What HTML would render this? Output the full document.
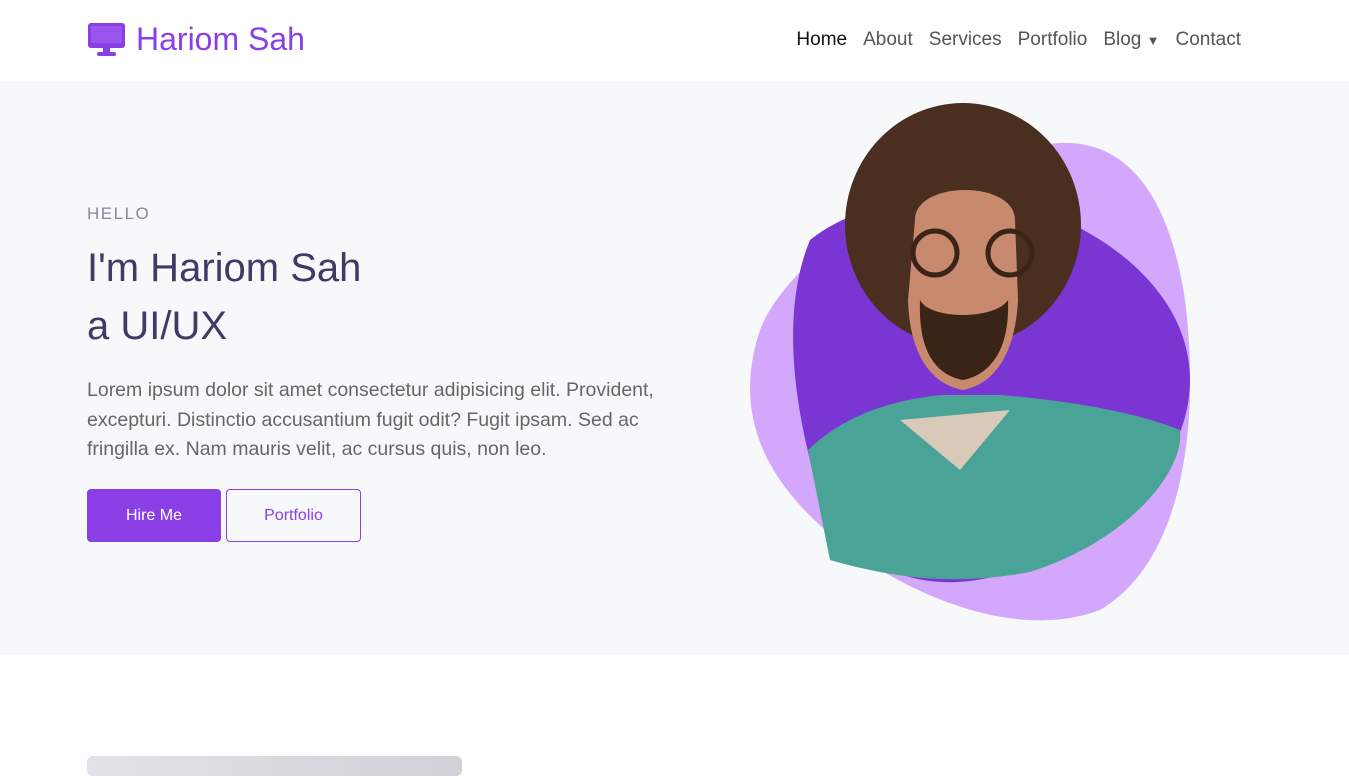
<!DOCTYPE html>
<html><head><meta charset="utf-8"><style>
*{margin:0;padding:0;box-sizing:border-box}
body{width:1349px;height:768px;overflow:hidden;font-family:"Liberation Sans",sans-serif;background:#fff;position:relative}
.nav{height:81px;background:#fff;position:relative}
.logo{position:absolute;left:87px;top:21px;display:flex;align-items:center;color:#8a3ee6;font-size:32px}
.logo svg{margin-right:10px}
.menu{position:absolute;right:108px;top:29px;display:flex;gap:16px;font-size:19px;color:#555}
.menu .a{color:#111}
.hero{position:absolute;top:81px;left:0;width:1349px;height:574px;background:#f7f8fa}
.hello{position:absolute;left:87px;top:204px;font-size:17px;letter-spacing:1.5px;color:#858a9b}
.h1{position:absolute;left:87px;top:239px;font-size:40px;color:#3e3c66;line-height:58px}
.p{position:absolute;left:87px;top:376px;width:580px;font-size:19.5px;line-height:29.5px;color:#666}
.btn{position:absolute;top:489px;height:53px;border-radius:4px;font-size:16px;display:flex;align-items:center;justify-content:center}
.b1{left:87px;width:134px;background:#8a3ee6;color:#fff}
.b2{left:226px;width:135px;border:1px solid #8a3ee6;color:#8a3ee6}
.card{position:absolute;left:87px;top:756px;width:375px;height:20px;background:linear-gradient(90deg,#e2e3e6,#d0d2d8);border-radius:6px}
</style></head><body>
<div class="nav">
<div class="logo"><svg width="39" height="35" viewBox="0 0 39 35"><rect x="1" y="1" width="37" height="25" rx="3" fill="#8a3ee6"/><rect x="4" y="4" width="31" height="17" fill="#9a55ee"/><rect x="16" y="25" width="7" height="6" fill="#8a3ee6"/><rect x="10" y="30" width="19" height="4" rx="2" fill="#8a3ee6"/></svg>Hariom Sah</div>
<div class="menu"><span class="a">Home</span><span>About</span><span>Services</span><span>Portfolio</span><span>Blog <span style="font-size:13px">▼</span></span><span>Contact</span></div>
</div>
<div class="hero"></div>
<div class="hello">HELLO</div>
<div class="h1">I'm Hariom Sah<br>a UI/UX</div>
<div class="p">Lorem ipsum dolor sit amet consectetur adipisicing elit. Provident, excepturi. Distinctio accusantium fugit odit? Fugit ipsam. Sed ac fringilla ex. Nam mauris velit, ac cursus quis, non leo.</div>
<div class="btn b1">Hire Me</div>
<div class="btn b2">Portfolio</div>
<svg style="position:absolute;left:0;top:0" width="1349" height="768">
<path d="M1060 143 C1130 140 1170 200 1185 300 C1200 420 1185 560 1100 610 C1020 640 920 600 850 550 C770 490 730 420 760 330 C790 250 950 150 1060 143Z" fill="#d3a8fc"/>
<path d="M1040 210 C1120 240 1190 300 1190 380 C1190 460 1120 540 1000 575 C910 600 830 560 810 460 C790 380 785 300 810 240 C860 200 960 180 1040 210Z" fill="#7b35d3"/>
<path d="M808 450 C850 410 900 400 940 395 L1000 395 C1060 400 1130 410 1180 430 C1185 470 1130 540 1030 572 C960 585 900 580 830 560 Z" fill="#4aa397"/>
<path d="M900 420 L960 470 L1010 410 Z" fill="#d8c9b8"/>
<ellipse cx="963" cy="225" rx="118" ry="122" fill="#4a2f20"/>
<path d="M915 220 C915 180 1015 180 1015 220 L1018 300 C1015 360 990 385 963 390 C935 385 910 360 908 300Z" fill="#c88a6e"/>
<path d="M920 300 C930 320 995 320 1008 300 C1010 350 990 375 963 380 C935 375 918 350 920 300Z" fill="#3a2418"/>
<circle cx="935" cy="253" r="22" fill="none" stroke="#3a2418" stroke-width="5"/>
<circle cx="1010" cy="253" r="22" fill="none" stroke="#3a2418" stroke-width="5"/>
</svg>
<div class="card"></div>
</body></html>
